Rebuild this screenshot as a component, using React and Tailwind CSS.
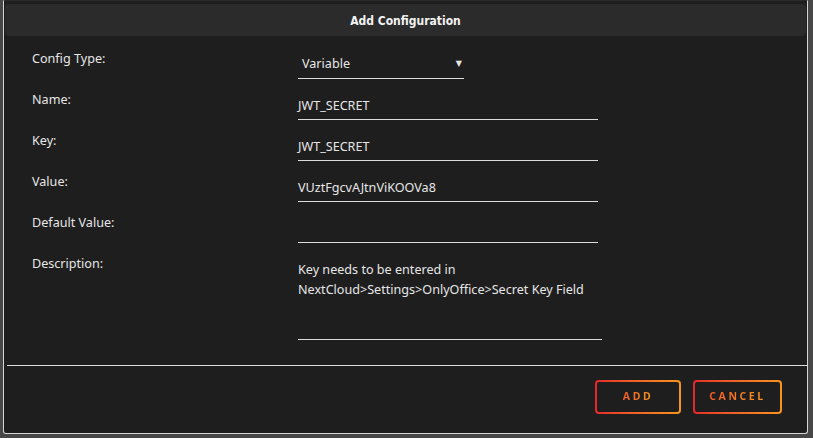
const FIELDS = [
  { label: 'Name:', value: 'JWT_SECRET' },
  { label: 'Key:', value: 'JWT_SECRET' },
  { label: 'Value:', value: 'VUztFgcvAJtnViKOOVa8' },
  { label: 'Default Value:', value: '' },
];

function OutlineButton({ children, width }) {
  return (
    <button
      className={`${width} h-[34px] rounded-[4px] p-[2px] bg-gradient-to-r from-[#e5262b] to-[#f7941d]`}
    >
      <span className="flex h-full w-full items-center justify-center rounded-[2px] bg-[#1e1e1e]">
        <span className="bg-gradient-to-r from-[#ef5a26] to-[#f7941d] bg-clip-text text-[10.5px] font-bold tracking-[2.6px] text-transparent">
          {children}
        </span>
      </span>
    </button>
  );
}

export default function App() {
  return (
    <div
      className="w-[813px] h-[438px] bg-[#474747] pl-[3px] pr-[5px] pb-[4px]"
      style={{ fontFamily: '"Noto Sans", "DejaVu Sans", sans-serif' }}
    >
      <div className="flex h-full flex-col rounded-b-[3px] border border-t-[#2a2a2a] border-x-[#d6d6d6] border-b-[#d6d6d6] bg-[#1e1e1e]">
        {/* title bar */}
        <div className="mx-[1px] mt-[3px] flex h-[32px] items-center justify-center rounded-[4px] bg-[#2b2b2b]">
          <h1
            className="pt-[1px] text-[12px] font-bold text-[#f2f2f2]"
            style={{ fontFamily: '"DejaVu Sans Condensed", "DejaVu Sans", sans-serif', fontStretch: 'condensed' }}
          >
            Add Configuration
          </h1>
        </div>

        {/* form */}
        <div className="pl-[28px] pt-[15px] text-[12.6px] leading-[16px] text-[#e6e6e6]">
          <div className="flex h-[41px]">
            <label className="w-[266px]">Config Type:</label>
            <div className="flex h-[28px] w-[166px] items-start justify-between border-b border-[#dcdcdc] pl-[4px] pr-[2px] pt-[5px]">
              <span>Variable</span>
              <span className="pt-[1px] text-[8px] leading-[12px]">▼</span>
            </div>
          </div>

          {FIELDS.map((f) => (
            <div key={f.label} className="flex h-[41px]">
              <label className="w-[266px]">{f.label}</label>
              <div className="h-[28px] w-[300px] border-b border-[#dcdcdc] pt-[6px]">{f.value}</div>
            </div>
          ))}

          <div className="flex">
            <label className="w-[266px]">Description:</label>
            <div className="h-[84px] w-[304px] border-b border-[#dcdcdc] pt-[4px] leading-[20px]">
              Key needs to be entered in
              <br />
              NextCloud&gt;Settings&gt;OnlyOffice&gt;Secret Key Field
            </div>
          </div>
        </div>

        <div className="ml-[3px] mt-[25px] border-t border-[#dcdcdc]" />

        <div className="flex justify-end gap-[12px] pr-[25px] pt-[14px]">
          <OutlineButton width="w-[86px]">ADD</OutlineButton>
          <OutlineButton width="w-[89px]">CANCEL</OutlineButton>
        </div>
      </div>
    </div>
  );
}
